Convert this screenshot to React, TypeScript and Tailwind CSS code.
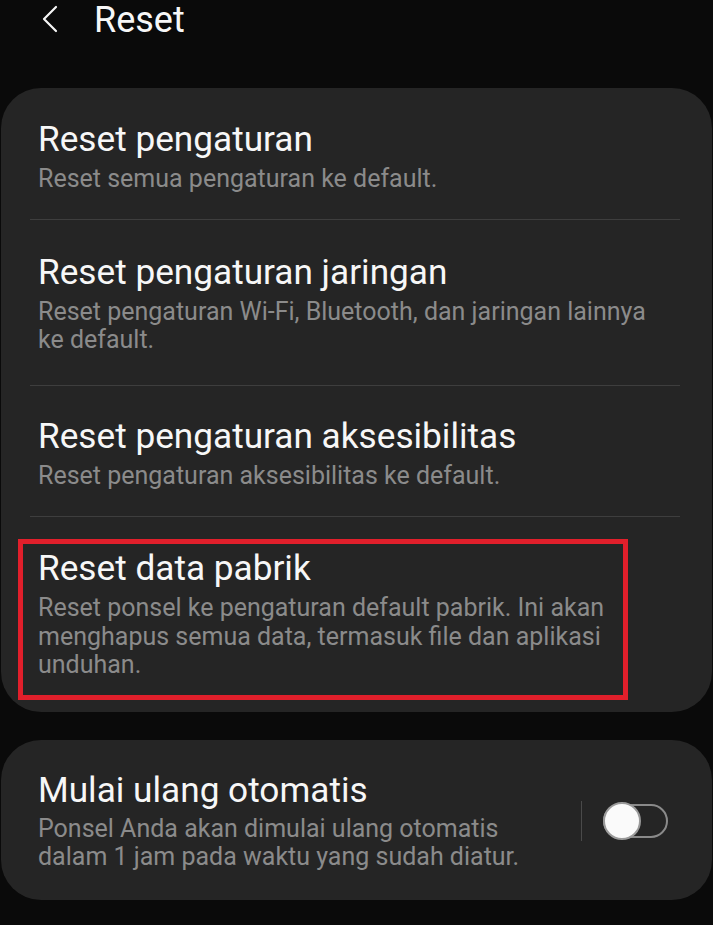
import { Fragment } from "react";

type ResetItem = {
  title: string;
  lines: string[];
  padding: string;
  highlighted?: boolean;
};

const resetItems: ResetItem[] = [
  {
    title: "Reset pengaturan",
    lines: ["Reset semua pengaturan ke default."],
    padding: "pt-[31px] pb-[25px]",
  },
  {
    title: "Reset pengaturan jaringan",
    lines: ["Reset pengaturan Wi-Fi, Bluetooth, dan jaringan lainnya", "ke default."],
    padding: "pt-[32px] pb-[30px]",
  },
  {
    title: "Reset pengaturan aksesibilitas",
    lines: ["Reset pengaturan aksesibilitas ke default."],
    padding: "pt-[30px] pb-[26px]",
  },
  {
    title: "Reset data pabrik",
    lines: [
      "Reset ponsel ke pengaturan default pabrik. Ini akan",
      "menghapus semua data, termasuk file dan aplikasi",
      "unduhan.",
    ],
    padding: "pt-[31px] pb-[32px]",
    highlighted: true,
  },
];

function Subtitle({ lines }: { lines: string[] }) {
  return (
    <p className="text-[25px] leading-[28.5px] text-[#8b8b8b]">
      {lines.map((line, i) => (
        <span key={i} className="block whitespace-nowrap">
          {line}
        </span>
      ))}
    </p>
  );
}

function ResetRow({ item }: { item: ResetItem }) {
  return (
    <div className={`relative px-[37px] ${item.padding}`}>
      {item.highlighted && (
        <span className="pointer-events-none absolute left-[17px] top-[22px] h-[161px] w-[610px] border-[5px] border-[#e11f2b]" />
      )}
      <h3 className="text-[35.2px] leading-[40px] text-[#f7f7f7]">{item.title}</h3>
      <div className="mt-[6px]">
        <Subtitle lines={item.lines} />
      </div>
    </div>
  );
}

function Toggle() {
  return (
    <div className="relative h-[34px] w-[65px] rounded-full border-2 border-[#8a8a8a]">
      <span className="absolute -left-[2px] -top-[4px] h-[38px] w-[38px] rounded-full border-2 border-[#9a9a9a] bg-[#fafafa]" />
    </div>
  );
}

export default function App() {
  return (
    <div
      className="min-h-[925px] w-[713px] overflow-hidden bg-[#0a0a0a] text-white"
      style={{ fontFamily: "Roboto, 'Noto Sans', sans-serif" }}
    >
      <header className="flex h-[40px] items-center">
        <svg
          className="ml-[41px] mb-[3px]"
          width="18"
          height="28"
          viewBox="0 0 18 28"
          fill="none"
          stroke="#f5f5f5"
          strokeWidth="2.2"
          strokeLinecap="round"
          strokeLinejoin="round"
        >
          <path d="M15 2 L3 14 L15 26" />
        </svg>
        <h1 className="ml-[35px] text-[36px] leading-[40px] text-[#f7f7f7]">Reset</h1>
      </header>

      <section className="mx-[1px] mt-[48px] rounded-[40px] bg-[#252525]">
        {resetItems.map((item, i) => (
          <Fragment key={item.title}>
            {i > 0 && <div className="ml-[29px] mr-[32px] h-px bg-[#3e3e3e]" />}
            <ResetRow item={item} />
          </Fragment>
        ))}
      </section>

      <section className="mx-[1px] mt-[28px] flex items-center rounded-[40px] bg-[#252525] pl-[37px] pr-[44px] pt-[30px] pb-[28px]">
        <div className="flex-1">
          <h3 className="text-[35.2px] leading-[40px] text-[#f7f7f7]">Mulai ulang otomatis</h3>
          <div className="mt-[5px]">
            <Subtitle
              lines={[
                "Ponsel Anda akan dimulai ulang otomatis",
                "dalam 1 jam pada waktu yang sudah diatur.",
              ]}
            />
          </div>
        </div>
        <div className="mr-[21px] h-[40px] w-px bg-[#4a4a4a]" />
        <Toggle />
      </section>
    </div>
  );
}
